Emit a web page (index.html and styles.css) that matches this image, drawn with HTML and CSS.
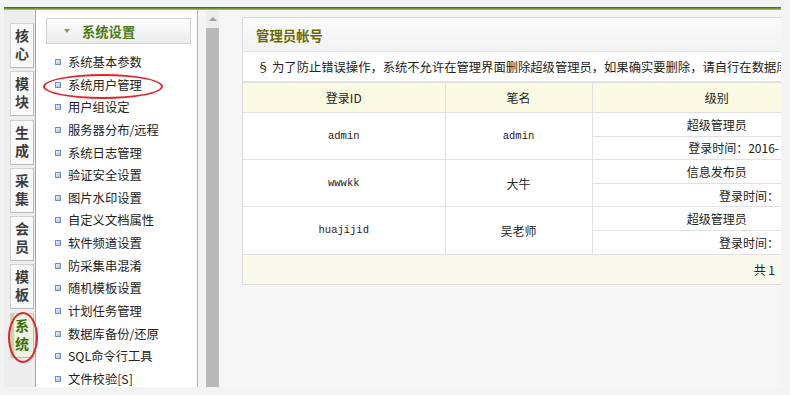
FILE: index.html
```html
<!DOCTYPE html>
<html lang="zh-CN">
<head>
  <meta charset="UTF-8">
  <title>系统用户管理</title>
  <link rel="stylesheet" href="styles.css">
</head>
<body>
<div class="screen">
  <div class="topbar"></div>
  <div class="layout">
    <ul class="tabs">
      <li class="tab"><span class="tab-text">核心</span></li>
      <li class="tab"><span class="tab-text">模块</span></li>
      <li class="tab"><span class="tab-text">生成</span></li>
      <li class="tab"><span class="tab-text">采集</span></li>
      <li class="tab"><span class="tab-text">会员</span></li>
      <li class="tab"><span class="tab-text">模板</span></li>
      <li class="tab tab-on"><span class="tab-text">系统</span></li>
    </ul>

    <div class="menu">
      <div class="menu-head"><span class="arrow"></span>系统设置</div>
      <ul class="menu-list">
        <li><span class="dot"></span>系统基本参数</li>
        <li><span class="dot"></span>系统用户管理</li>
        <li><span class="dot"></span>用户组设定</li>
        <li><span class="dot"></span>服务器分布/远程</li>
        <li><span class="dot"></span>系统日志管理</li>
        <li><span class="dot"></span>验证安全设置</li>
        <li><span class="dot"></span>图片水印设置</li>
        <li><span class="dot"></span>自定义文档属性</li>
        <li><span class="dot"></span>软件频道设置</li>
        <li><span class="dot"></span>防采集串混淆</li>
        <li><span class="dot"></span>随机模板设置</li>
        <li><span class="dot"></span>计划任务管理</li>
        <li><span class="dot"></span>数据库备份/还原</li>
        <li><span class="dot"></span>SQL命令行工具</li>
        <li><span class="dot"></span>文件校验[S]</li>
      </ul>
    </div>

    <div class="scroll">
      <div class="scroll-up"><span class="up"></span></div>
      <div class="thumb"></div>
    </div>

    <div class="main">
      <div class="panel">
        <div class="panel-title">管理员帐号</div>
        <div class="notice">§ 为了防止错误操作，系统不允许在管理界面删除超级管理员，如果确实要删除，请自行在数据库中处理！</div>
        <table class="list">
          <colgroup>
            <col class="w-id">
            <col class="w-name">
            <col>
          </colgroup>
          <tr>
            <th class="c-id">登录ID</th>
            <th>笔名</th>
            <th>级别</th>
          </tr>
          <tr class="sub">
            <td class="c-id mono" rowspan="2">admin</td>
            <td class="mono" rowspan="2">admin</td>
            <td>超级管理员</td>
          </tr>
          <tr class="sub">
            <td class="time">登录时间：2016-</td>
          </tr>
          <tr class="sub">
            <td class="c-id mono" rowspan="2">wwwkk</td>
            <td rowspan="2">大牛</td>
            <td>信息发布员</td>
          </tr>
          <tr class="sub">
            <td class="time">登录时间：</td>
          </tr>
          <tr class="sub">
            <td class="c-id mono" rowspan="2">huajijid</td>
            <td rowspan="2">吴老师</td>
            <td>超级管理员</td>
          </tr>
          <tr class="sub">
            <td class="time">登录时间：</td>
          </tr>
          <tr>
            <td class="c-id foot" colspan="3">共 1</td>
          </tr>
        </table>
      </div>
    </div>
  </div>

  <!-- 红色圈注 -->
  <span class="mark mark-user"></span>
  <span class="mark mark-tab"></span>
</div>
</body>
</html>
```

FILE: styles.css
```css
* {
    box-sizing: border-box;
}

body {
    margin: 0;
    background: #f3f3f3;
    font-family: "Noto Sans CJK SC", sans-serif;
    font-size: 12px;
    color: #222;
}

.screen {
    position: relative;
    width: 777px;
    height: 380px;
    margin: 7px 0 0 4px;
    overflow: hidden;
    background: #f5f5f5;
    display: flex;
    flex-direction: column;
}

.topbar {
    flex: none;
    height: 3px;
    background: linear-gradient(#3e5e16, #6f9234 50%, #b7cc8e);
}

.layout {
    flex: 1;
    display: flex;
    min-height: 0;
}

/* 左侧竖排标签 */
.tabs {
    flex: none;
    width: 31px;
    margin: 0;
    padding: 13px 0 0 6px;
    list-style: none;
    background: #ededed;
}

.tab {
    width: 24px;
    height: 45px;
    margin-bottom: 3.3px;
    padding-top: 3px;
    border: 1px solid #d2d2d2;
    border-right-color: #b8b8b8;
    border-bottom-color: #b8b8b8;
    background: #f9f9f9;
    display: flex;
    justify-content: center;
    align-items: center;
    font-size: 14px;
    font-weight: bold;
    color: #3d3d3d;
}

.tab-text {
    writing-mode: vertical-rl;
    letter-spacing: 4px;
    line-height: 14px;
}

.tab-on {
    background: linear-gradient(90deg, #c3d69c 0, #c3d69c 3px, #eef4e2 3px);
    color: #3c6d0e;
}

/* 菜单 */
.menu {
    flex: none;
    width: 163px;
    background: #fff;
    border-left: 1px solid #a9a9a9;
    border-right: 1px solid #b3b3b3;
}

.menu-head {
    width: 145px;
    height: 26px;
    margin: 8px 0 0 10px;
    padding-left: 17px;
    border: 1px solid #d0d0d0;
    background: linear-gradient(#fdfdfd, #ebebeb);
    display: flex;
    align-items: center;
    font-size: 13.3px;
    font-weight: bold;
    color: #4b7a17;
}

.arrow {
    width: 0;
    height: 0;
    margin-right: 12px;
    border-left: 3px solid transparent;
    border-right: 3px solid transparent;
    border-top: 4px solid #79a33a;
}

.menu-list {
    margin: 6.7px 0 0;
    padding: 0 0 0 19px;
    list-style: none;
}

.menu-list li {
    height: 22.65px;
    display: flex;
    align-items: center;
    font-size: 12.3px;
    white-space: nowrap;
}

.dot {
    flex: none;
    width: 6px;
    height: 6px;
    margin-right: 7px;
    border: 1px solid #6f8fc4;
    background: linear-gradient(135deg, #eef4fd, #a7bfe6);
}

/* 滚动条 */
.scroll {
    flex: none;
    width: 22px;
    padding-left: 8px;
    background: #f4f4f4;
    display: flex;
    flex-direction: column;
}

.scroll-up {
    width: 13px;
    height: 18px;
    background: #ededed;
    display: flex;
    justify-content: center;
    align-items: center;
}

.up {
    width: 0;
    height: 0;
    border-left: 4px solid transparent;
    border-right: 4px solid transparent;
    border-bottom: 4px solid #a0a0a0;
}

.thumb {
    flex: 1;
    width: 13px;
    background: #b8b8b8;
}

/* 主区域 */
.main {
    flex: 1;
    min-width: 0;
    overflow: hidden;
    padding: 7px 0 0 22px;
}

.panel {
    width: 600px;
    background: #fff;
    border: 1px solid #dadada;
    border-right: none;
}

.panel-title {
    height: 34px;
    padding-left: 13px;
    display: flex;
    align-items: center;
    font-size: 13.4px;
    font-weight: bold;
    color: #6a6a00;
    background: linear-gradient(#fafafa, #f2f2f2);
    border-bottom: 1px solid #e2e2e2;
}

.notice {
    height: 30px;
    padding-left: 14px;
    display: flex;
    align-items: center;
    font-size: 12.3px;
    white-space: nowrap;
    overflow: hidden;
    border-bottom: 1px solid #e1e1e1;
}

.list {
    width: 100%;
    border-collapse: collapse;
    table-layout: fixed;
}

.w-id {
    width: 202px;
}

.w-name {
    width: 147px;
}

.list th,
.list td {
    border: 1px solid #e0e0e0;
    padding: 0;
    text-align: center;
    white-space: nowrap;
    font-weight: normal;
}

.list th {
    height: 30px;
    background: #fafae3;
}

.list .c-id {
    border-left: none;
}

.sub {
    height: 23.6px;
}

.mono {
    font-family: "Liberation Mono", monospace;
    font-size: 10.5px;
}

.list .time {
    text-align: right;
    padding-right: 62px;
}

.list .foot {
    height: 30px;
    text-align: right;
    padding-right: 66px;
    background: #f8f9ec;
    border-bottom: none;
}

/* 红色圈注 */
.mark {
    position: absolute;
    border: 2px solid #e2252b;
    border-radius: 50%;
}

.mark-user {
    left: 39px;
    top: 67px;
    width: 120px;
    height: 25px;
}

.mark-tab {
    left: 4px;
    top: 305px;
    width: 30px;
    height: 51px;
}
```
